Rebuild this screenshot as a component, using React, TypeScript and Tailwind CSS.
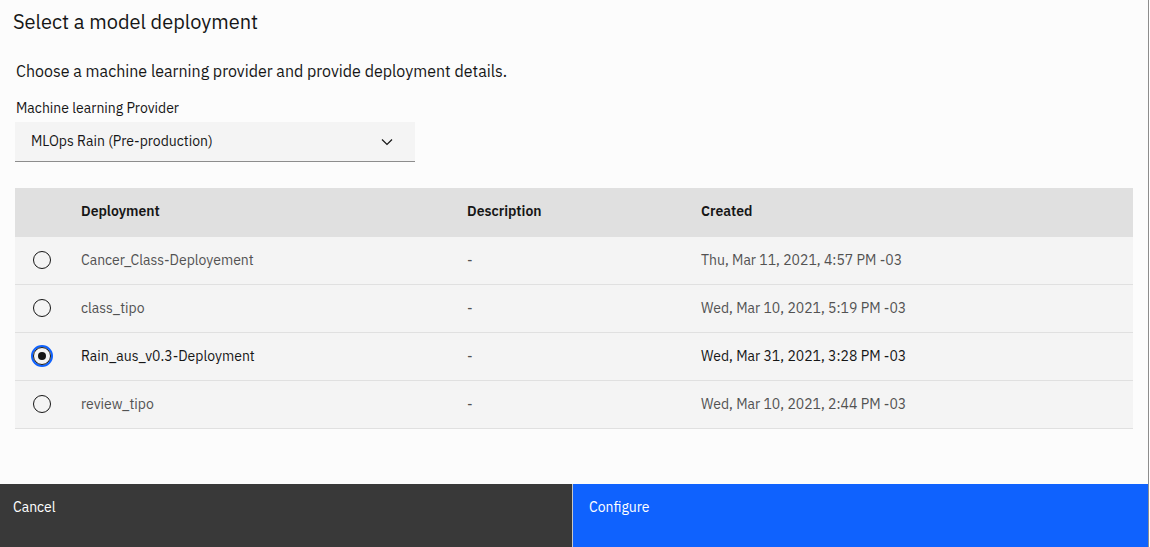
import { useState } from 'react'

interface Deployment {
  id: string
  name: string
  description: string
  created: string
}

const deployments: Deployment[] = [
  { id: '1', name: 'Cancer_Class-Deployement', description: '-', created: 'Thu, Mar 11, 2021, 4:57 PM -03' },
  { id: '2', name: 'class_tipo', description: '-', created: 'Wed, Mar 10, 2021, 5:19 PM -03' },
  { id: '3', name: 'Rain_aus_v0.3-Deployment', description: '-', created: 'Wed, Mar 31, 2021, 3:28 PM -03' },
  { id: '4', name: 'review_tipo', description: '-', created: 'Wed, Mar 10, 2021, 2:44 PM -03' },
]

function Radio({ checked }: { checked: boolean }) {
  if (checked) {
    return (
      <span className="flex h-[22px] w-[22px] items-center justify-center rounded-full border-2 border-[#0f62fe]">
        <span className="flex h-[18px] w-[18px] items-center justify-center rounded-full border border-[#161616] bg-[#f4f4f4]">
          <span className="h-2 w-2 rounded-full bg-[#161616]" />
        </span>
      </span>
    )
  }
  return <span className="block h-[18px] w-[18px] rounded-full border border-[#161616]" />
}

export default function App() {
  const [selected, setSelected] = useState('3')

  return (
    <div
      className="flex h-[547px] w-[1149px] flex-col border-r border-[#8d8d8d] bg-[#fcfcfc] text-[#161616]"
      style={{ fontFamily: '"IBM Plex Sans", "Noto Sans", Roboto, sans-serif' }}
    >
      <div className="flex-1 px-[15px]">
        <h2 className="-ml-[2px] pt-[8px] text-[20px] leading-[28px]">Select a model deployment</h2>
        <p className="ml-[1px] mt-[24px] text-[16px] leading-[22px]">
          Choose a machine learning provider and provide deployment details.
        </p>
        <label className="ml-[1px] mt-[18px] block text-[14px] leading-[16px]">Machine learning Provider</label>
        <button className="mt-[6px] flex h-[40px] w-[400px] items-center justify-between border-b border-[#8d8d8d] bg-[#f4f4f4] pl-4 pr-[22px] text-left text-[14px]">
          <span>MLOps Rain (Pre-production)</span>
          <svg width="12" height="8" viewBox="0 0 12 8" fill="none" stroke="#161616" strokeWidth="1.2">
            <path d="M1 1.5 6 6.5 11 1.5" />
          </svg>
        </button>

        <table className="mt-[26px] w-[1118px] border-collapse text-[14px]">
          <thead>
            <tr className="h-[48px] bg-[#e0e0e0] text-left">
              <th className="w-[66px]" />
              <th className="w-[386px] font-semibold">Deployment</th>
              <th className="w-[234px] font-semibold">Description</th>
              <th className="font-semibold">Created</th>
            </tr>
          </thead>
          <tbody>
            {deployments.map(d => {
              const isSel = d.id === selected
              return (
                <tr
                  key={d.id}
                  className="h-[48px] cursor-pointer border-t border-[#e0e0e0] bg-[#f4f4f4] last:border-b"
                  onClick={() => setSelected(d.id)}
                >
                  <td className="pl-[16px]">
                    <span className="-mt-px flex h-[22px] w-[22px] items-center justify-center">
                      <Radio checked={isSel} />
                    </span>
                  </td>
                  <td className={isSel ? 'text-[#161616]' : 'text-[#525252]'}>{d.name}</td>
                  <td className="text-[#525252]">{d.description}</td>
                  <td className={isSel ? 'text-[#161616]' : 'text-[#525252]'}>{d.created}</td>
                </tr>
              )
            })}
          </tbody>
        </table>
      </div>

      <div className="flex h-[63px] text-[14px] text-white">
        <button className="flex w-[573px] items-start border-r border-[#c6c6c6] bg-[#393939] pl-[13px] pt-[13px] text-left">
          Cancel
        </button>
        <button className="flex flex-1 items-start bg-[#0f62fe] pl-4 pt-[13px] text-left">Configure</button>
      </div>
    </div>
  )
}
